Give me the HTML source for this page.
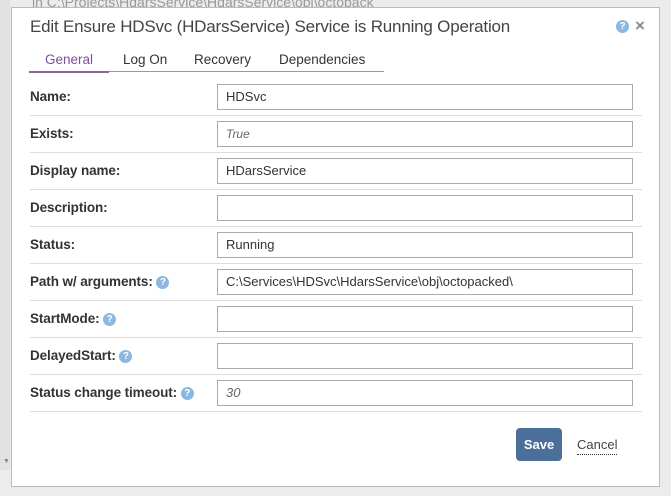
<!DOCTYPE html>
<html><head><style>
body{margin:0;width:671px;height:496px;background:#ececec;font-family:"Liberation Sans",sans-serif;position:relative;overflow:hidden}
.bgtext{position:absolute;left:32px;top:-6px;color:#999;font-size:14px}
.bgbar{position:absolute;left:0;top:0;width:10px;height:470px;background:#e2e2e2}
.dlg{position:absolute;left:11px;top:7px;width:647px;height:478px;background:#fff;border:1px solid #bbb}
.title{position:absolute;left:18px;top:9px;font-size:17px;color:#444;letter-spacing:-0.2px}
.help{display:inline-block;width:13px;height:13px;border-radius:50%;background:#8ab8e0;color:#fff;font-size:10px;font-weight:bold;text-align:center;line-height:13px;vertical-align:middle}
.tabs{position:absolute;left:17px;top:44px;width:355px;height:19px;border-bottom:1px solid #999;font-size:13.5px;color:#333}
.tabs span{position:absolute;top:0}
.gen{left:0;width:80px;text-align:center;color:#7f4f99;border-bottom:2px solid #8a63a0;height:19px}
.row{position:absolute;left:18px;width:612px;height:36px;border-bottom:1px solid #ddd}
.lbl{position:absolute;left:0;top:10px;font-size:13.5px;font-weight:bold;color:#333;letter-spacing:-0.1px}
.inp{position:absolute;left:187px;top:5px;border:1px solid #aaa;font-size:13px;color:#333;line-height:24px;padding-left:8px;box-sizing:border-box;width:416px;height:26px}
</style></head><body>
<div class="bgbar"></div>
<div class="bgtext">in C:\Projects\HdarsService\HdarsService\obj\octopack</div>
<div class="dlg">
<div class="title">Edit Ensure HDSvc (HDarsService) Service is Running Operation</div>
<span class="help" style="position:absolute;left:604px;top:12px">?</span>
<span style="position:absolute;left:623px;top:8px;font-size:17px;color:#888;font-weight:bold">×</span>
<div class="tabs"><span class="gen">General</span><span style="left:94px">Log On</span><span style="left:165px">Recovery</span><span style="left:250px">Dependencies</span></div>
<div class="row" style="top:71px"><div class="lbl">Name:</div><div class="inp">HDSvc</div></div>
<div class="row" style="top:108px"><div class="lbl">Exists:</div><div class="inp" style="font-style:italic;color:#666;font-size:12px">True</div></div>
<div class="row" style="top:145px"><div class="lbl">Display name:</div><div class="inp">HDarsService</div></div>
<div class="row" style="top:182px"><div class="lbl">Description:</div><div class="inp"></div></div>
<div class="row" style="top:219px"><div class="lbl">Status:</div><div class="inp">Running</div></div>
<div class="row" style="top:256px"><div class="lbl">Path w/ arguments: <span class="help">?</span></div><div class="inp">C:\Services\HDSvc\HdarsService\obj\octopacked\</div></div>
<div class="row" style="top:293px"><div class="lbl">StartMode: <span class="help">?</span></div><div class="inp"></div></div>
<div class="row" style="top:330px"><div class="lbl">DelayedStart: <span class="help">?</span></div><div class="inp"></div></div>
<div class="row" style="top:367px"><div class="lbl">Status change timeout: <span class="help">?</span></div><div class="inp" style="font-style:italic;color:#666">30</div></div>
<div style="position:absolute;left:504px;top:420px;width:46px;height:33px;background:#4a6f99;border-radius:4px;color:#fff;font-size:13px;font-weight:bold;text-align:center;line-height:33px">Save</div>
<div style="position:absolute;left:565px;top:429px;font-size:13px;color:#444;border-bottom:1px dotted #333;padding-bottom:2px">Cancel</div>
</div>
<div style="position:absolute;left:3px;top:458px;font-size:7px;color:#888">▼</div>
</body></html>
